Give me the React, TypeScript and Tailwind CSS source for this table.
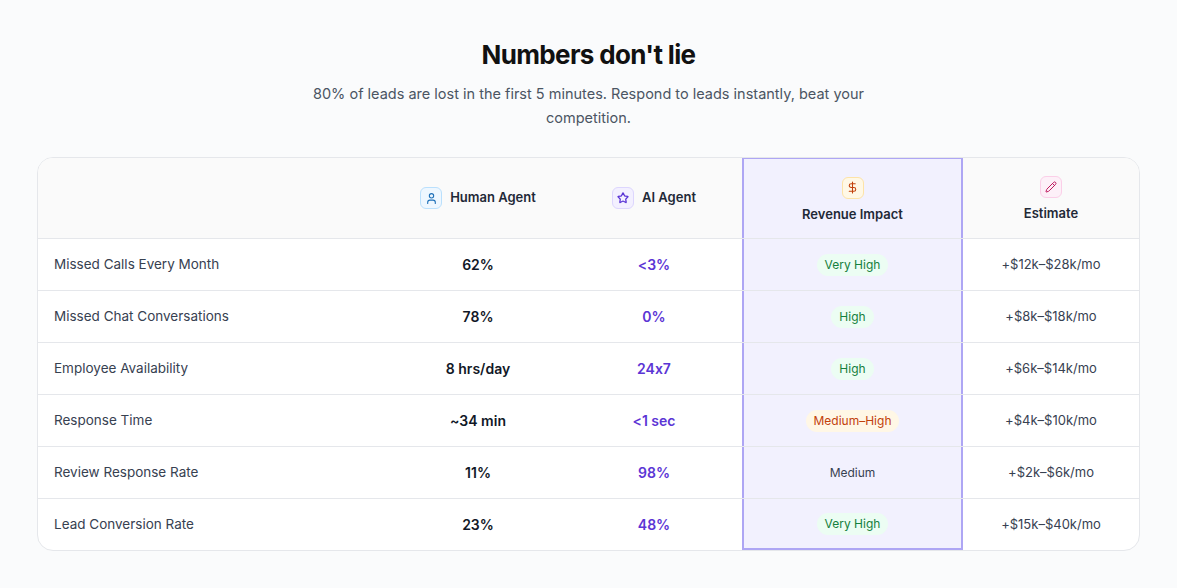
import { User, Star, DollarSign, Pencil } from "lucide-react";

type Impact = "veryHigh" | "high" | "medHigh" | "medium";

type Row = {
  label: string;
  human: string;
  ai: string;
  impact: Impact;
  estimate: string;
};

const ROWS: Row[] = [
  { label: "Missed Calls Every Month", human: "62%", ai: "<3%", impact: "veryHigh", estimate: "+$12k–$28k/mo" },
  { label: "Missed Chat Conversations", human: "78%", ai: "0%", impact: "high", estimate: "+$8k–$18k/mo" },
  { label: "Employee Availability", human: "8 hrs/day", ai: "24x7", impact: "high", estimate: "+$6k–$14k/mo" },
  { label: "Response Time", human: "~34 min", ai: "<1 sec", impact: "medHigh", estimate: "+$4k–$10k/mo" },
  { label: "Review Response Rate", human: "11%", ai: "98%", impact: "medium", estimate: "+$2k–$6k/mo" },
  { label: "Lead Conversion Rate", human: "23%", ai: "48%", impact: "veryHigh", estimate: "+$15k–$40k/mo" },
];

function ImpactBadge({ impact }: { impact: Impact }) {
  if (impact === "veryHigh")
    return <span className="rounded-full bg-[#ecfdf3] px-2 py-0.5 text-[12px] text-[#15803d]">Very High</span>;
  if (impact === "high")
    return <span className="rounded-full bg-[#ecfdf3] px-2 py-0.5 text-[12px] text-[#15803d]">High</span>;
  if (impact === "medHigh")
    return <span className="rounded-full bg-[#fff7e6] px-2 py-0.5 text-[12px] text-[#c2410c]">Medium–High</span>;
  return <span className="px-2 py-0.5 text-[12px] text-[#374151]">Medium</span>;
}

const GRID = "grid grid-cols-[352px_176px_176px_221px_1fr]";

export default function App() {
  return (
    <div
      className="min-h-screen bg-[#fafbfc] px-[37px] pb-9 pt-[37px] [font-feature-settings:'calt'_0]"
      style={{ fontFamily: "Inter, 'Noto Sans', sans-serif" }}
    >
      <h1 className="text-center text-[26px] font-bold leading-9 tracking-[-0.025em] text-[#111111]">
        Numbers don't lie
      </h1>
      <p className="mx-auto mt-[9px] max-w-[560px] text-center text-[14.5px] leading-6 text-[#4b5563]">
        80% of leads are lost in the first 5 minutes. Respond to leads instantly, beat your competition.
      </p>

      <div className="mx-auto mt-[27px] max-w-[1103px] overflow-hidden rounded-2xl border border-[#e5e7eb] bg-white">
        {/* header */}
        <div className={`${GRID} h-[80px] bg-[#fafafa]`}>
          <div />
          <div className="flex items-center justify-center gap-2">
            <span className="flex h-[22px] w-[22px] items-center justify-center rounded-md border border-[#bae0fd] bg-[#eef7ff] text-[#1d6fb8]">
              <User size={13} strokeWidth={2} />
            </span>
            <span className="text-[13px] font-semibold text-[#1f2937]">Human Agent</span>
          </div>
          <div className="flex items-center justify-center gap-2">
            <span className="flex h-[22px] w-[22px] items-center justify-center rounded-md border border-[#ddd6fe] bg-[#f3f0ff] text-[#5b35d5]">
              <Star size={12} strokeWidth={2.6} />
            </span>
            <span className="text-[13px] font-semibold text-[#1f2937]">AI Agent</span>
          </div>
          <div className="-mt-px flex flex-col items-center justify-center gap-[6px] border-x-2 border-t-2 border-[#aea6f4] bg-[#f2f1fe] pt-1">
            <span className="flex h-[22px] w-[22px] items-center justify-center rounded-md border border-[#fde3a7] bg-[#fff8e6] text-[#c2410c]">
              <DollarSign size={13} strokeWidth={2} />
            </span>
            <span className="text-[13px] font-semibold text-[#1f2937]">Revenue Impact</span>
          </div>
          <div className="flex flex-col items-center justify-center gap-[6px] pt-1">
            <span className="flex h-[22px] w-[22px] items-center justify-center rounded-md border border-[#fbcfe8] bg-[#fdf0f8] text-[#be185d]">
              <Pencil size={12} strokeWidth={2} />
            </span>
            <span className="text-[13px] font-semibold text-[#1f2937]">Estimate</span>
          </div>
        </div>

        {ROWS.map((row, i) => {
          const last = i === ROWS.length - 1;
          return (
            <div key={row.label} className={`${GRID} h-[52px] border-t border-[#e5e7eb]`}>
              <div className="flex items-center pl-4 text-[13.5px] text-[#374151]">{row.label}</div>
              <div className="flex items-center justify-center text-[14px] font-semibold text-[#111827]">
                {row.human}
              </div>
              <div className="flex items-center justify-center text-[14px] font-semibold text-[#5b35d5]">
                {row.ai}
              </div>
              <div
                className={`flex items-center justify-center border-x-2 border-[#aea6f4] bg-[#f2f1fe] ${
                  last ? "border-b-2" : ""
                }`}
              >
                <ImpactBadge impact={row.impact} />
              </div>
              <div className="flex items-center justify-center text-[13px] text-[#374151]">{row.estimate}</div>
            </div>
          );
        })}
      </div>
    </div>
  );
}
